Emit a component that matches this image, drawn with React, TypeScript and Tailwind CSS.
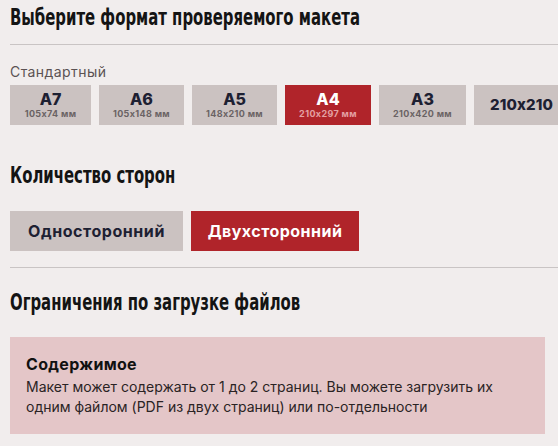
import React from "react";

const formats = [
  { t: "A7", s: "105x74 мм", w: "w-[81px]" },
  { t: "A6", s: "105x148 мм", w: "w-[85px]" },
  { t: "A5", s: "148x210 мм", w: "w-[85px]" },
  { t: "A4", s: "210x297 мм", w: "w-[86px]", active: true },
  { t: "A3", s: "210x420 мм", w: "w-[87px]" },
];

function Heading({ children }: { children: React.ReactNode }) {
  return (
    <h2 className="font-['DejaVu_Sans_Condensed','DejaVu_Sans',sans-serif] font-bold text-[23px] leading-[28px] text-[#141414] origin-left scale-x-[0.72] whitespace-nowrap">
      {children}
    </h2>
  );
}

export default function App() {
  return (
    <div className="w-[558px] h-[446px] overflow-hidden bg-[#f1eded] font-['Inter','Noto_Sans',sans-serif] [font-feature-settings:'calt'_0]">
      <div className="pl-[10px] pt-[3px]">
        <Heading>Выберите формат проверяемого макета</Heading>
        <div className="mt-[13px] h-px bg-[#c9c4c4]" />
        <div className="mt-[18px] text-[14px] leading-[17px] tracking-[0.03em] text-[#5b5253]">Стандартный</div>
        <div className="mt-[5px] flex gap-[8px] overflow-hidden">
          {formats.map((f) => (
            <div
              key={f.t}
              className={`${f.w} h-[40px] shrink-0 flex flex-col items-center justify-center ${
                f.active ? "bg-[#b0242a]" : "bg-[#cbc2c1]"
              }`}
            >
              <div
                className={`text-[16px] leading-[17px] font-extrabold ${
                  f.active ? "text-white" : "text-[#1d2032]"
                }`}
              >
                {f.t}
              </div>
              <div
                className={`text-[9px] leading-[11px] font-bold tracking-[0.04em] ${
                  f.active ? "text-[#e4a0a3]" : "text-[#6a6264]"
                }`}
              >
                {f.s}
              </div>
            </div>
          ))}
          <div className="h-[40px] shrink-0 w-[100px] pl-[16px] flex items-center bg-[#cbc2c1] text-[15px] tracking-[0.01em] font-extrabold text-[#1d2032]">
            210x210
          </div>
        </div>
        <div className="mt-[36px]">
          <Heading>Количество сторон</Heading>
        </div>
        <div className="mt-[22px] flex gap-[8px]">
          <div className="w-[173px] h-[40px] flex items-center justify-center bg-[#cbc2c1] text-[16px] tracking-[0.035em] font-bold text-[#1d2032]">
            Односторонний
          </div>
          <div className="w-[168px] h-[40px] flex items-center justify-center bg-[#b0242a] text-[16px] tracking-[0.03em] font-bold text-white">
            Двухсторонний
          </div>
        </div>
        <div className="mt-[16px] h-px bg-[#c9c4c4]" />
        <div className="mt-[20px]">
          <Heading>Ограничения по загрузке файлов</Heading>
        </div>
        <div className="mt-[21px] w-[535px] h-[97px] bg-[#e4c6c8] pl-[16px] pt-[17px]">
          <div className="text-[16px] leading-[20px] tracking-[0.02em] font-bold text-[#111]">Содержимое</div>
          <div className="mt-[3px] max-w-[494px] text-[14px] leading-[20px] text-[#2a2324]">
            Макет может содержать от 1 до 2 страниц. Вы можете загрузить их одним файлом (PDF из двух страниц) или по-отдельности
          </div>
        </div>
      </div>
    </div>
  );
}
